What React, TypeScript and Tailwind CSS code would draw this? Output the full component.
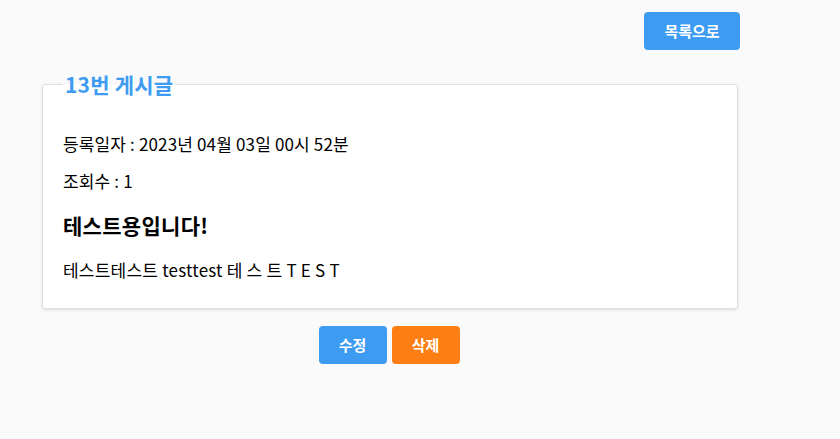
export default function App() {
  return (
    <div
      className="min-h-[439px] w-full bg-[#fafafa] text-black"
      style={{ fontFamily: '"Noto Sans CJK KR", "Noto Sans", sans-serif' }}
    >
      <div className="ml-[42px] w-[696px] pt-[12px]">
        {/* Top action */}
        <div className="flex justify-end">
          <button className="mr-[-2px] h-[38px] w-[96px] rounded-[4px] bg-[#3d9bf1] text-[15px] font-bold text-white">
            목록으로
          </button>
        </div>

        {/* Post card */}
        <fieldset className="mt-[22px] rounded-[3px] border border-[#dedede] bg-white px-[20px] pb-[27px] shadow-[0_1px_3px_rgba(0,0,0,0.12)]">
          <legend className="px-[2px] text-[21px] font-bold leading-[24px] tracking-[0.2px] text-[#3d9bf1]">
            13번 게시글
          </legend>
          <p className="mt-[37px] text-[17px] leading-[22px] tracking-[0.15px]">
            등록일자 : 2023년 04월 03일 00시 52분
          </p>
          <p className="mt-[15px] text-[17px] leading-[22px] tracking-[0.15px]">조회수 : 1</p>
          <h2 className="mt-[20px] text-[21px] font-bold leading-[26px] tracking-[0.3px]">테스트용입니다!</h2>
          <p className="mt-[21px] text-[17px] leading-[22px] tracking-[0.22px]">
            테스트테스트 testtest 테 스 트 T E S T
          </p>
        </fieldset>

        {/* Bottom actions */}
        <div className="mt-[17px] flex justify-center gap-[5px] pr-[2px]">
          <button className="h-[38px] w-[68px] rounded-[4px] bg-[#3d9bf1] text-[15px] font-bold text-white">
            수정
          </button>
          <button className="h-[38px] w-[68px] rounded-[4px] bg-[#fd7f14] text-[15px] font-bold text-white">
            삭제
          </button>
        </div>
      </div>
    </div>
  );
}
